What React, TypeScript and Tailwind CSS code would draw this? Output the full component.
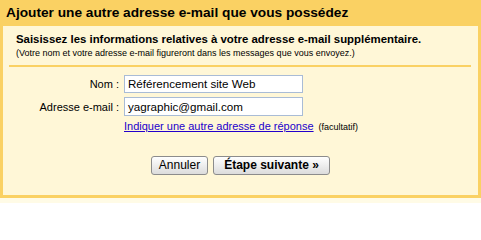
import React from "react";

export default function App() {
  return (
    <div className="w-[481px] bg-[#fffbe6] pb-[5px] font-['Liberation_Sans'] text-black">
      <div className="bg-[#fad163] px-[3px] pb-[3px]">
        <div className="pl-[3px] pt-[5px] pb-[5px] text-[13.7px] font-bold leading-[16px]">
          Ajouter une autre adresse e-mail que vous possédez
        </div>
        <div className="bg-[#fff7d7] pb-[20px] flex flex-col">
          <div className="pl-[13px] pt-[6px] text-[11.4px] font-bold leading-[14px]">
            Saisissez les informations relatives à votre adresse e-mail supplémentaire.
          </div>
          <div className="pl-[13px] text-[9px] leading-[12px] mt-[1px]">
            (Votre nom et votre adresse e-mail figureront dans les messages que vous envoyez.)
          </div>
          <div className="ml-[6px] mr-[7px] mt-[6px] border-t-2 border-[#fad163]" />
          <div className="flex flex-col gap-[4px] mt-[8px]">
            <div className="flex items-center gap-[5px]">
              <div className="w-[116px] text-right text-[11px] leading-[14px]">Nom :</div>
              <div className="w-[179px] border border-[#a9bcd6] bg-white pl-[3px] text-[11.6px] leading-[16px]">
                Référencement site Web
              </div>
            </div>
            <div className="flex items-center gap-[5px]">
              <div className="w-[116px] text-right text-[11px] leading-[14px]">Adresse e-mail :</div>
              <div className="w-[179px] border border-[#a9bcd6] bg-white pl-[3px] py-[0.5px] text-[11.6px] leading-[16px]">
                yagraphic@gmail.com
              </div>
            </div>
          </div>
          <div className="pl-[121px] mt-[3px] flex items-baseline gap-[5px]">
            <span className="text-[11px] leading-[14px] text-[#2200cc] underline">
              Indiquer une autre adresse de réponse
            </span>
            <span className="text-[9px] leading-[12px]">(facultatif)</span>
          </div>
          <div className="flex justify-center gap-[5px] mt-[23px]">
            <div className="w-[57px] rounded-[3px] border border-[#8c8c8c] bg-gradient-to-b from-[#ffffff] to-[#dcdcdc] text-[12px] leading-[17px] text-center">
              Annuler
            </div>
            <div className="w-[117px] rounded-[3px] border border-[#8c8c8c] bg-gradient-to-b from-[#ffffff] to-[#dcdcdc] text-[12px] font-bold leading-[17px] text-center">
              Étape suivante »
            </div>
          </div>
        </div>
      </div>
    </div>
  );
}
